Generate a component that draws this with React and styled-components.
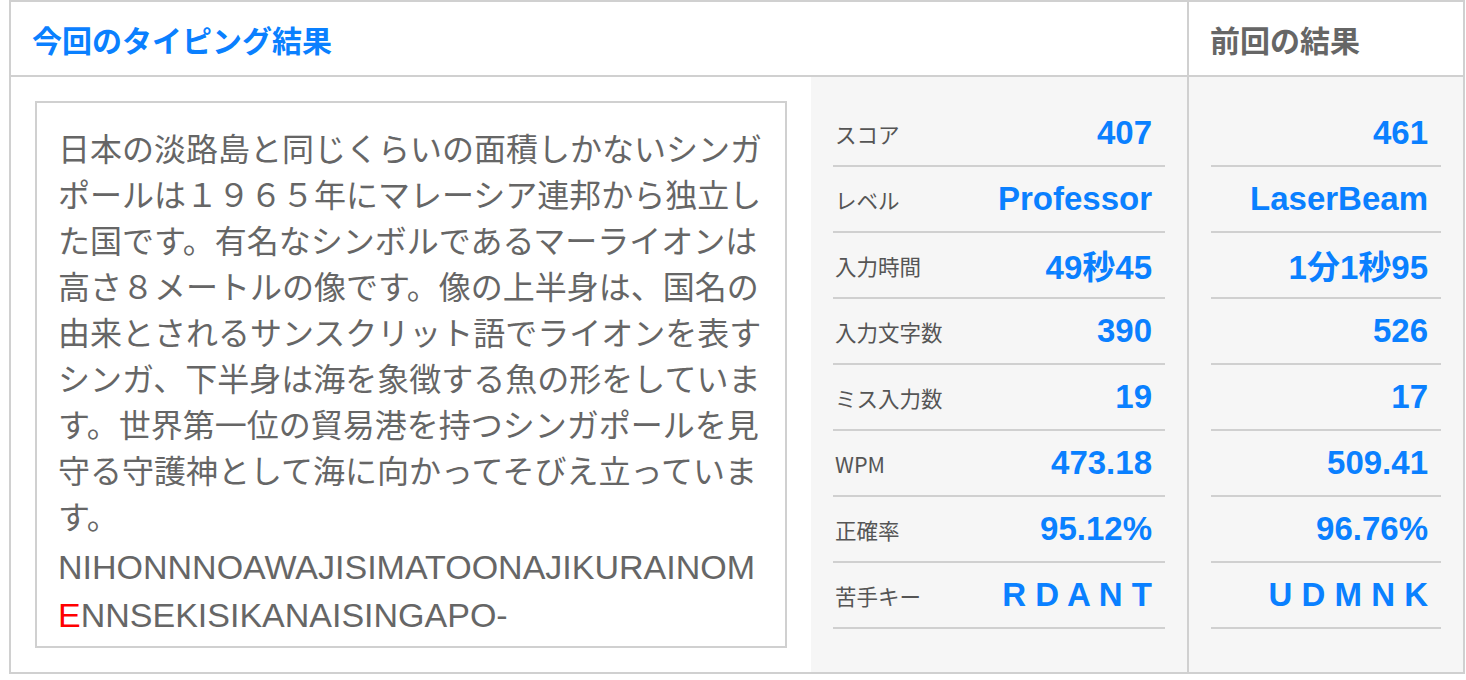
import React from 'react';
import styled, {createGlobalStyle} from "styled-components";

const GlobalStyle = createGlobalStyle`
  body {
    margin: 0;
    background: #fff;
    font-family: "Liberation Sans", "Noto Sans CJK JP", sans-serif;
  }
`;

const Panel = styled.div`
  margin-left: 9px;
  width: 1456px;
  box-sizing: border-box;
  border: 2px solid #d0d0d0;
`;

const Header = styled.div`
  display: grid;
  grid-template-columns: 1176px 276px;
  height: 75px;
  border-bottom: 2px solid #d0d0d0;
  box-sizing: border-box;
`;

const HeaderCell = styled.div`
  display: flex;
  align-items: center;
  padding-left: 21px;
  border-left: ${props => (props.divided ? '2px solid #d0d0d0' : 'none')};
  font-family: "Noto Sans CJK JP", sans-serif;
  font-size: 30px;
  font-weight: 700;
  color: ${props => (props.current ? '#0a80ff' : '#666')};
`;

const Body = styled.div`
  display: grid;
  grid-template-columns: 800px 376px 276px;
`;

const TextColumn = styled.div`
  padding: 24px;
  background: #fff;
`;

const TextBox = styled.div`
  border: 2px solid #d0d0d0;
  padding: 21px 21px 7px 21px;
  color: #666;
`;

const Sentence = styled.div`
  font-family: "Noto Sans CJK JP", sans-serif;
  font-size: 32px;
  line-height: 46px;
  line-break: strict;
`;

const Romaji = styled.div`
  margin-top: 5px;
  font-family: "Liberation Sans", sans-serif;
  font-size: 34px;
  line-height: 48px;
  word-break: break-all;
`;

const Miss = styled.span`
  color: #ff0000;
`;

const StatsColumn = styled.div`
  background: #f6f6f6;
  padding: 24px 22px 0 22px;
  border-left: ${props => (props.divided ? '2px solid #d0d0d0' : 'none')};
`;

const Row = styled.div`
  display: flex;
  align-items: center;
  justify-content: ${props => (props.label ? 'space-between' : 'flex-end')};
  height: 64px;
  padding: 0 13px 0 2px;
  border-bottom: 2px solid #d0d0d0;
`;

const Label = styled.span`
  font-family: "Noto Sans CJK JP", sans-serif;
  font-size: 21.5px;
  color: #555;
`;

const Value = styled.span`
  font-family: "Liberation Sans", "Noto Sans CJK JP", sans-serif;
  font-size: 33px;
  font-weight: 700;
  color: #0a80ff;
`;

const stats = [
    {label: 'スコア', now: '407', prev: '461'},
    {label: 'レベル', now: 'Professor', prev: 'LaserBeam'},
    {label: '入力時間', now: '49秒45', prev: '1分1秒95'},
    {label: '入力文字数', now: '390', prev: '526'},
    {label: 'ミス入力数', now: '19', prev: '17'},
    {label: 'WPM', now: '473.18', prev: '509.41'},
    {label: '正確率', now: '95.12%', prev: '96.76%'},
    {label: '苦手キー', now: 'R D A N T', prev: 'U D M N K'},
];

const sentence = '日本の淡路島と同じくらいの面積しかないシンガポールは１９６５年にマレーシア連邦から独立した国です。有名なシンボルであるマーライオンは高さ８メートルの像です。像の上半身は、国名の由来とされるサンスクリット語でライオンを表すシンガ、下半身は海を象徴する魚の形をしています。世界第一位の貿易港を持つシンガポールを見守る守護神として海に向かってそびえ立っています。';

const App = () => {
    return (
        <>
            <GlobalStyle/>
            <Panel>
                <Header>
                    <HeaderCell current={1}>今回のタイピング結果</HeaderCell>
                    <HeaderCell divided={1}>前回の結果</HeaderCell>
                </Header>
                <Body>
                    <TextColumn>
                        <TextBox>
                            <Sentence>{sentence}</Sentence>
                            <Romaji>
                                NIHONNNOAWAJISIMATOONAJIKURAINOM<Miss>E</Miss>NNSEKISIKANAISINGAPO-
                            </Romaji>
                        </TextBox>
                    </TextColumn>
                    <StatsColumn>
                        {stats.map(s => (
                            <Row label={1} key={s.label}>
                                <Label>{s.label}</Label>
                                <Value>{s.now}</Value>
                            </Row>
                        ))}
                    </StatsColumn>
                    <StatsColumn divided={1}>
                        {stats.map(s => (
                            <Row key={s.label}>
                                <Value>{s.prev}</Value>
                            </Row>
                        ))}
                    </StatsColumn>
                </Body>
            </Panel>
        </>
    );
};

export default App;
